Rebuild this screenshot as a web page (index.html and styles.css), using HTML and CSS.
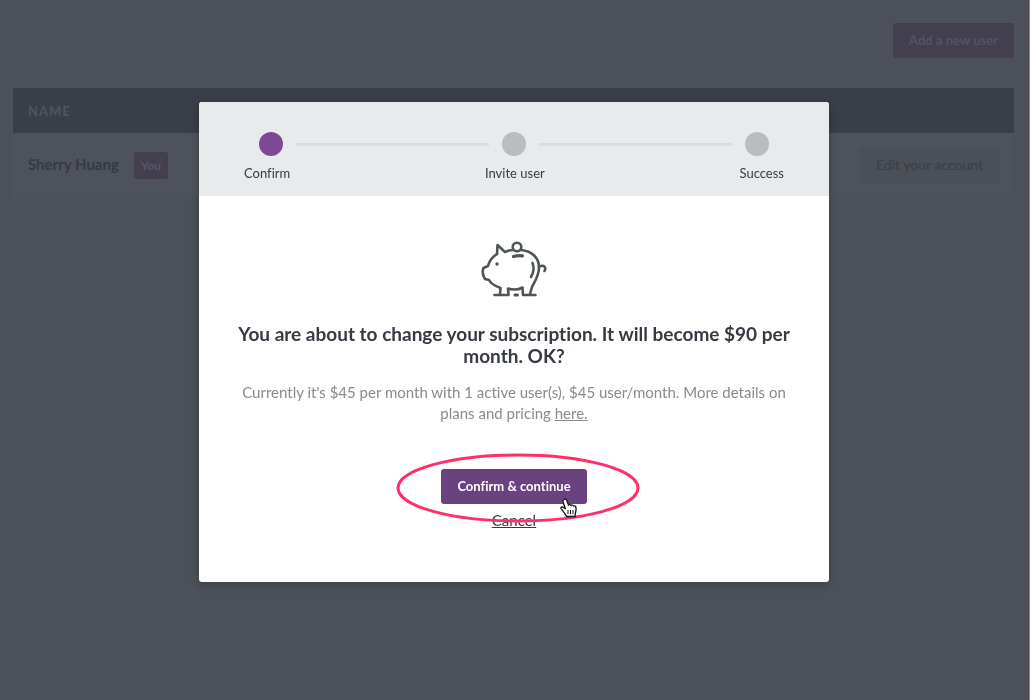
FILE: index.html
```html
<!DOCTYPE html>
<html lang="en">
<head>
  <meta charset="UTF-8" />
  <meta name="viewport" content="width=device-width, initial-scale=1" />
  <title>Users</title>
  <link rel="stylesheet" href="styles.css">
</head>
<body>
  <!-- Users page, dimmed while the dialog is open -->
  <main class="page">
    <div class="toolbar">
      <button type="button" class="add-user">Add a new user</button>
    </div>
    <table class="users">
      <thead>
        <tr><th>NAME</th><th></th></tr>
      </thead>
      <tbody>
        <tr>
          <td><span class="user-name">Sherry Huang</span><span class="badge">You</span></td>
          <td class="actions"><button type="button" class="edit">Edit your account</button></td>
        </tr>
      </tbody>
    </table>
  </main>

  <!-- Subscription dialog -->
  <div class="overlay">
    <section class="modal" role="dialog" aria-modal="true" aria-labelledby="modal-title">
      <header class="steps">
        <div class="track">
          <span class="dot active"></span>
          <span class="line"></span>
          <span class="dot"></span>
          <span class="line"></span>
          <span class="dot"></span>
        </div>
        <div class="step-labels">
          <span>Confirm</span>
          <span>Invite user</span>
          <span>Success</span>
        </div>
      </header>

      <div class="content">
        <svg class="piggy" viewBox="0 0 66 56" fill="none" stroke="#4f5557" stroke-width="2.6" stroke-linecap="round" stroke-linejoin="round">
          <path d="M16 13 L16.500 4 L24 11 C27 9.500 29 9 32 9 M40 9 C51 10 58 17 58 26 C58 35 54 40 51 46 L49 53"/>
          <path d="M16 13 C12 15.500 8.500 19 7 25 L2.500 27 C1 31 2 35 4 38 L8 39 C10 43 14 45 19.500 47 L19 53"/>
          <path d="M13.500 54 H27.500 L27 47.500 C32 49 37 49 41.500 46.500 L42 54 H54.500"/>
          <path d="M34 54 H36.500" stroke-width="3"/>
          <circle cx="36" cy="6" r="4.300"/>
          <path d="M32.500 15.500 C36 14.500 38 14.500 41.500 14.800" stroke-width="3.200"/>
          <path d="M51.500 22 C53.500 27 53 31 50 36"/>
          <path d="M58 25.500 C63 23.500 65.500 26 63.500 30"/>
          <circle cx="16" cy="23" r="1.700" fill="#4f5557" stroke="none"/>
        </svg>
        <h1 id="modal-title">You are about to change your subscription. It will become $90 per month. OK?</h1>
        <p>Currently it's $45 per month with 1 active user(s), $45 user/month. More details on plans and pricing <a href="#">here.</a></p>
        <div class="choices">
          <button type="button" class="confirm">Confirm &amp; continue</button>
          <a href="#" class="cancel">Cancel</a>
          <svg class="highlight" viewBox="0 0 244 70" fill="none">
            <ellipse cx="122" cy="35" rx="120" ry="33" stroke="#ff3069" stroke-width="3"/>
          </svg>
          <svg class="pointer" viewBox="0 0 18 20">
            <path d="M4 1.500 C5.500 .5 6.500 1.500 7 3 L8.500 7 C9.500 6 10.500 6.500 11 7.500 C12 6.500 13 7 13.500 8 C15 7.500 16 8 16 10 C16.500 13 15 15 15 18.500 H6.500 C5 15 3 13.500 1 10.500 C.5 8.500 2.500 8 5.500 11 L3 4 C2.700 2.800 3 2 4 1.500Z" fill="#fff" stroke="#111" stroke-width="1.300"/>
            <path d="M8 12 V16 M10.500 12 V16 M13 12 V16" stroke="#111"/>
          </svg>
        </div>
      </div>
    </section>
  </div>
</body>
</html>
```

FILE: styles.css
```css
:root {
  --bg: #4c5059;
  --bar: #3a3e48;
  --plum: #433f4f;
  --purple: #6b4280;
  --ink: #363a43;
}

* { box-sizing: border-box; margin: 0; padding: 0; }

body {
  min-height: 100vh;
  background: var(--bg);
  border-right: 1px solid #85878a;
  font-family: Lato, sans-serif;
  font-variant-ligatures: none;
  color: var(--ink);
}

button {
  font-family: inherit;
  font-variant-ligatures: none;
  border: 0;
  border-radius: 3px;
  cursor: pointer;
}

/* Page behind the dialog */
.page { padding: 23px 15px 0 13px; }
.toolbar {
  display: flex;
  justify-content: flex-end;
  margin-bottom: 30px;
}
.add-user {
  height: 35px;
  padding: 0 16px 2px;
  background: var(--plum);
  color: #505660;
  font-size: 13px;
  font-weight: 700;
}
.users {
  width: 100%;
  border-collapse: collapse;
}
.users th {
  height: 45px;
  padding: 0 15px;
  background: var(--bar);
  color: #51555e;
  font-size: 13px;
  letter-spacing: 1px;
  text-align: left;
}
.users td {
  height: 65px;
  padding: 0 15px;
  background: #4e525a;
}
.user-name {
  margin-right: 15px;
  font-size: 15px;
  font-weight: 700;
}
.badge {
  display: inline-block;
  padding: 0 7px;
  border-radius: 3px;
  background: var(--plum);
  color: #565962;
  font-size: 12px;
  font-weight: 700;
  line-height: 27px;
}
.users .actions { text-align: right; }
.edit {
  height: 35px;
  padding: 0 16px 2px;
  background: #4b4f57;
  color: #3a3e46;
  font-size: 14px;
}

/* Dialog */
.overlay {
  position: fixed;
  inset: 0;
  padding: 102px 16px 16px 14px;
  overflow: auto;
}
.modal {
  max-width: 630px;
  margin: 0 auto;
  overflow: hidden;
  border-radius: 3px;
  background: #fff;
  box-shadow: 0 2px 8px rgba(0,0,0,0.25);
}

/* Step indicator */
.steps {
  padding: 30px 45px 14px;
  background: #e8eaeb;
}
.track {
  display: flex;
  align-items: center;
  gap: 13px;
  padding: 0 15px;
}
.dot {
  width: 24px;
  height: 24px;
  border-radius: 50%;
  background: #babdbe;
}
.dot.active { background: #7c4a94; }
.line {
  flex: 1;
  height: 3px;
  background: #dadcdd;
}
.step-labels {
  display: flex;
  justify-content: space-between;
  margin-top: 8px;
  font-size: 13px;
  line-height: 18px;
}

/* Message */
.content {
  padding: 45px 36px 53px;
  text-align: center;
}
.piggy {
  display: block;
  width: 66px;
  height: 56px;
  margin: 0 auto 26px;
}
h1 {
  font-size: 19px;
  line-height: 22px;
}
p {
  margin: 15px 0 45px;
  color: #888a91;
  font-size: 15px;
  line-height: 21px;
}
p a { color: inherit; }

.choices {
  position: relative;
  display: flex;
  flex-direction: column;
  align-items: center;
  gap: 7px;
}
.confirm {
  height: 35px;
  padding: 0 16px 2px;
  background: var(--purple);
  color: #fff;
  font-size: 13px;
  font-weight: 700;
}
.cancel {
  color: var(--ink);
  font-size: 15px;
  line-height: 18px;
}

/* Callout over the confirm button */
.highlight {
  position: absolute;
  top: -16px;
  left: calc(50% - 118px);
  width: 244px;
  height: 70px;
  pointer-events: none;
}
.pointer {
  position: absolute;
  top: 29px;
  left: calc(50% + 46px);
  width: 18px;
  height: 20px;
  pointer-events: none;
}
```
